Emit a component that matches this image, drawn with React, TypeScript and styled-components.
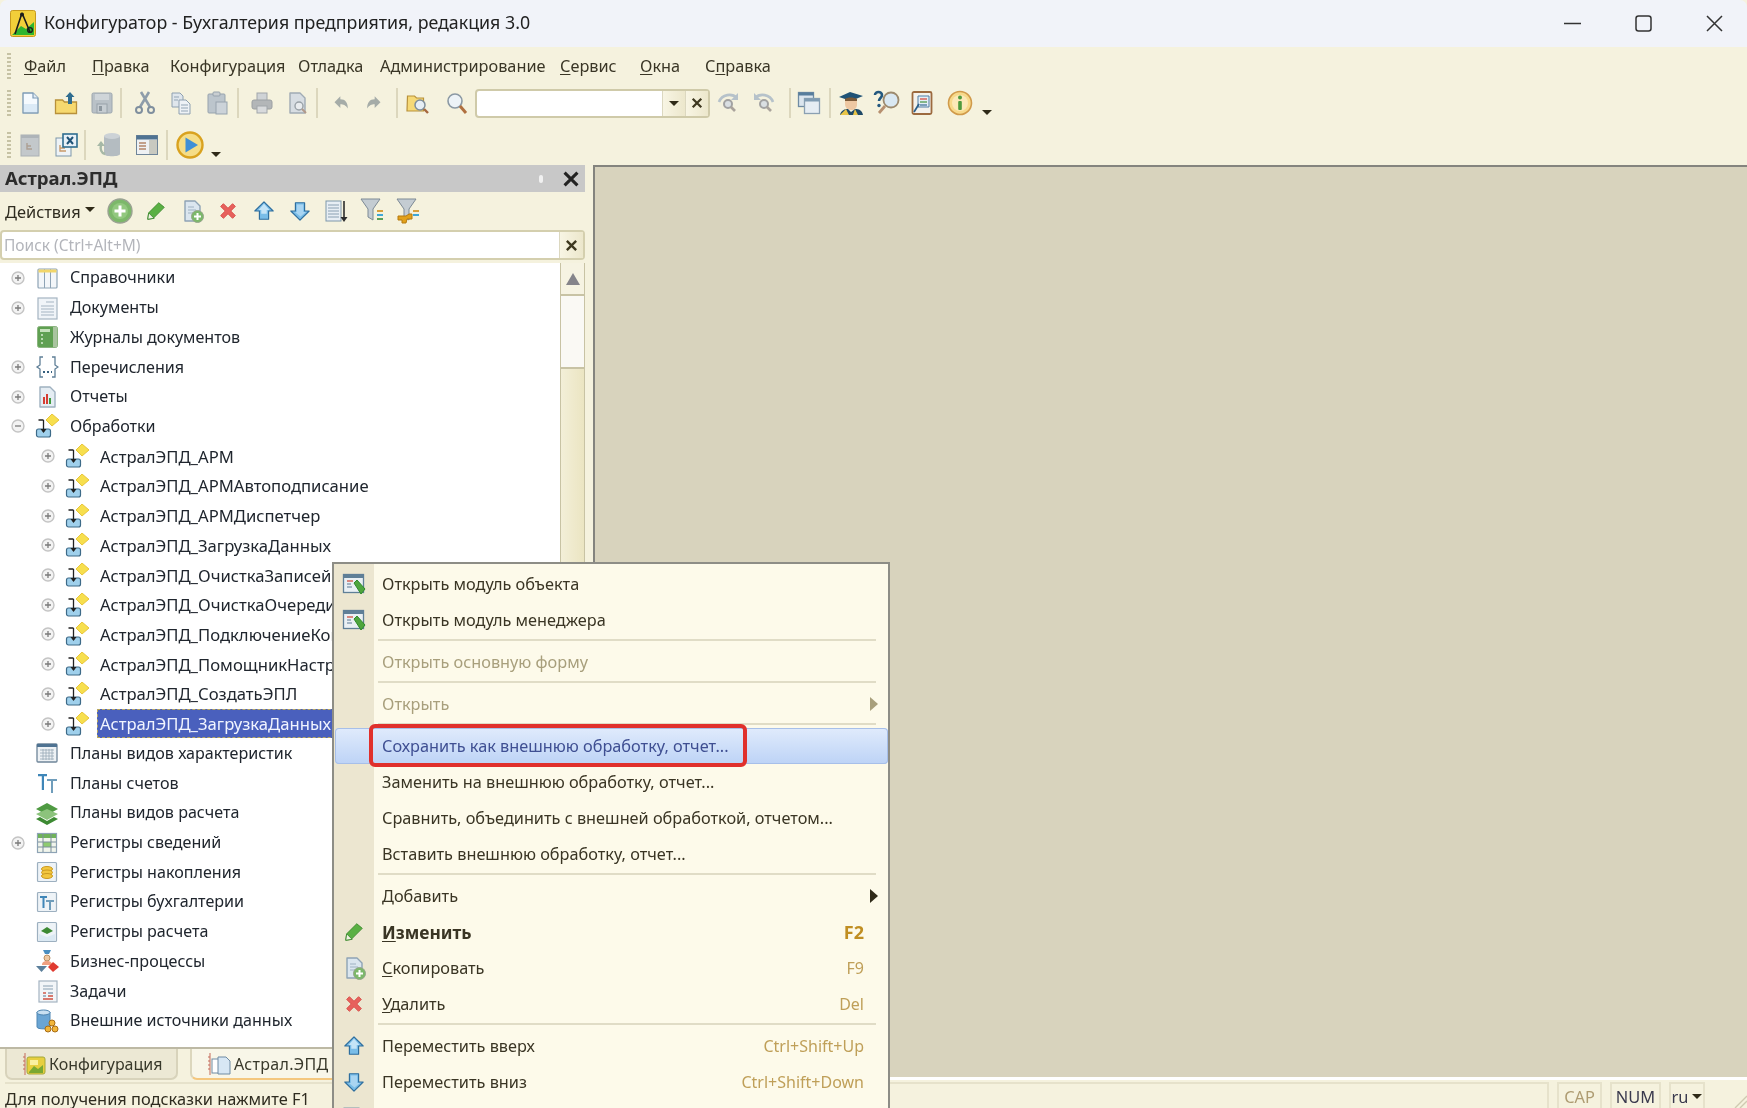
import React from 'react';
import styled, { createGlobalStyle } from 'styled-components';

const GlobalStyle = createGlobalStyle`
  html, body { margin: 0; padding: 0; background: #fff; }
  body { font-family: "Noto Sans", "Liberation Sans", sans-serif; }
`;

type SvgProps = { s?: number; children: React.ReactNode };
const Svg = ({ s = 24, children }: SvgProps) => (
  <svg width={s} height={s} viewBox="0 0 24 24" fill="none">{children}</svg>
);

const page = (fill: string, stroke: string) => (
  <path d="M5 2h10l5 5v15H5z" fill={fill} stroke={stroke} strokeWidth="1.4" strokeLinejoin="round" />
);

const I = {
  Logo: () => (
    <svg width={26} height={27} viewBox="0 0 26 27">
      <rect x="0.5" y="0.5" width="25" height="26" rx="2" fill="#f2cf3a" stroke="#c79a1e" />
      <path d="M2 25l9-9 5 3 8-7v13z" fill="#2fb52f" />
      <path d="M12 3L5 24M12 3l8 19" stroke="#1c1c1c" strokeWidth="1.6" fill="none" />
      <circle cx="12" cy="4.5" r="2" fill="#1c1c1c" />
      <circle cx="20" cy="20" r="2.4" fill="none" stroke="#1c1c1c" strokeWidth="1.4" />
    </svg>
  ),
  DocNew: () => (
    <Svg>
      {page('#f5fafe', '#7e9cb6')}
      <path d="M6 13h13v8H6z" fill="#dbeaf6" />
      <path d="M15 2v5h5" fill="#e2ecf4" stroke="#7e9cb6" strokeWidth="1.2" />
    </Svg>
  ),
  FolderUp: () => (
    <Svg>
      <path d="M1.5 9h7l2 2h12v11.5h-21z" fill="#f6d96f" stroke="#b8913a" strokeWidth="1.3" />
      <path d="M16 1l4.5 5H18v7h-4V6h-2.500z" fill="#2f6d8f" />
    </Svg>
  ),
  Floppy: () => (
    <Svg>
      <rect x="2" y="2" width="20" height="20" rx="1.5" fill="#b9c1c7" stroke="#9ca6ae" />
      <rect x="5" y="3" width="14" height="6" fill="#cfd5d9" />
      <rect x="7" y="13" width="10" height="9" fill="#c6cdd2" stroke="#98a2aa" />
      <rect x="9" y="15" width="3" height="5" fill="#8d979f" />
    </Svg>
  ),
  Scissors: () => (
    <Svg>
      <path d="M7 16L16 1M17 16L8 1" stroke="#8e9daa" strokeWidth="2.6" />
      <circle cx="6" cy="19" r="3" stroke="#7f8f9e" strokeWidth="2" />
      <circle cx="18" cy="19" r="3" stroke="#7f8f9e" strokeWidth="2" />
    </Svg>
  ),
  Copy: () => (
    <Svg>
      <path d="M3 2h8l3 3v11H3z" fill="#dfe6ec" stroke="#8ea0b0" />
      <path d="M10 9h7l4 4v10H10z" fill="#eef2f6" stroke="#8ea0b0" />
      <path d="M5 6h5M5 9h4M12 14h7M12 17h7M12 20h7" stroke="#93a5b5" />
    </Svg>
  ),
  Clipboard: () => (
    <Svg>
      <rect x="3" y="3" width="17" height="19" rx="1" fill="#bcc5cc" stroke="#97a3ad" />
      <rect x="8" y="1" width="7" height="4" rx="1" fill="#c9ced1" stroke="#97a3ad" />
      <rect x="11" y="11" width="11" height="12" fill="#ccd3d9" stroke="#97a3ad" />
    </Svg>
  ),
  Printer: () => (
    <Svg>
      <rect x="7" y="2" width="10" height="8" fill="#cfd3d6" stroke="#a1a6aa" />
      <rect x="2" y="9" width="20" height="9" rx="2" fill="#b3b6b8" stroke="#9ca0a3" />
      <rect x="7" y="15" width="10" height="7" fill="#d8dadc" stroke="#a1a6aa" />
    </Svg>
  ),
  Preview: () => (
    <Svg>
      {page('#d7dde2', '#a0abb4')}
      <circle cx="14" cy="15" r="4" fill="#e9ecee" stroke="#99a1a7" strokeWidth="1.4" />
      <path d="M17 18l4 4" stroke="#b29a8a" strokeWidth="2" />
    </Svg>
  ),
  Undo: () => (
    <Svg s={20}>
      <path d="M10 4L3 11l7 7v-4.500c4 0 6 1 9 5 0-7-3-11-9-11z" fill="#a5aca8" />
    </Svg>
  ),
  Redo: () => (
    <Svg s={20}>
      <path d="M14 4l7 7-7 7v-4.500c-4 0-6 1-9 5 0-7 3-11 9-11z" fill="#a5aca8" />
    </Svg>
  ),
  FolderFind: () => (
    <Svg>
      <path d="M1.500 5h7l2 2h7v13h-16.500z" fill="#f6d976" stroke="#b8913a" strokeWidth="1.2" />
      <circle cx="14" cy="14" r="5" fill="#e6eef4" stroke="#7f8e9a" strokeWidth="1.5" />
      <path d="M18 18l4 4" stroke="#a5673e" strokeWidth="2.400" />
    </Svg>
  ),
  Magnifier: () => (
    <Svg>
      <circle cx="10" cy="10" r="7" fill="#edf3f7" stroke="#8b99a4" strokeWidth="1.600" />
      <path d="M15 15l6 7" stroke="#b0703f" strokeWidth="3" />
    </Svg>
  ),
  FindNext: () => (
    <Svg>
      <path d="M3 11C6 3 16 2 21 7" stroke="#b6c2ca" strokeWidth="2.600" />
      <path d="M22 2v7h-7z" fill="#b6c2ca" />
      <circle cx="12" cy="13" r="4" fill="#dadfe2" stroke="#a2a2a2" strokeWidth="2" />
      <path d="M15 16l4 4" stroke="#aaa39c" strokeWidth="2.600" />
    </Svg>
  ),
  FindPrev: () => (
    <Svg>
      <path d="M21 11C18 3 8 2 3 7" stroke="#b6c2ca" strokeWidth="2.600" />
      <path d="M2 2v7h7z" fill="#b6c2ca" />
      <circle cx="12" cy="13" r="4" fill="#dadfe2" stroke="#a2a2a2" strokeWidth="2" />
      <path d="M15 16l4 4" stroke="#aaa39c" strokeWidth="2.600" />
    </Svg>
  ),
  Windows: () => (
    <Svg>
      <rect x="1.500" y="1.500" width="15" height="14" fill="#dbe5ee" stroke="#6f8ba3" strokeWidth="1.300" />
      <rect x="1.500" y="1.500" width="15" height="3" fill="#567d9c" />
      <rect x="7.500" y="7.500" width="15" height="15" fill="#e6edf3" stroke="#8ba0b2" strokeWidth="1.300" />
      <rect x="7.500" y="7.500" width="15" height="3" fill="#7f9bb2" />
    </Svg>
  ),
  Scholar: () => (
    <svg width={26} height={26} viewBox="0 0 26 26">
      <path d="M1 7l11-5 13 4-12 5z" fill="#1f5377" />
      <path d="M7 9h12v5c0 4-2 6-6 6s-6-3-6-6z" fill="#eec8a2" />
      <path d="M7 9c2-2 9-2 12 0v2H7z" fill="#7b5a38" />
      <path d="M2 25c1-5 5-6 8-6l3 3 4-3c4 0 7 1 8 6z" fill="#1f4a68" />
      <path d="M2 25l6-6 3 6zM17 19l3 6h-5z" fill="#e8c548" />
    </svg>
  ),
  HelpSearch: () => (
    <svg width={28} height={26} viewBox="0 0 28 26" fill="none">
      <path d="M2 5c0-4 7-4 7 0 0 3-3 3-3 6" stroke="#23587f" strokeWidth="2.600" />
      <circle cx="6" cy="15.500" r="1.700" fill="#23587f" />
      <circle cx="18" cy="10" r="7.500" fill="#d9e8f2" stroke="#9c8a6e" strokeWidth="1.800" />
      <path d="M12 16l-6 7" stroke="#b79070" strokeWidth="2.800" />
    </svg>
  ),
  Book: () => (
    <Svg>
      <rect x="2.500" y="1" width="19" height="22" rx="1.500" fill="#f4f2ec" stroke="#9c6a3f" strokeWidth="1.800" />
      <path d="M8 5h11v11H8z" fill="#e4eef6" stroke="#4f7da3" />
      <path d="M10 8h7" stroke="#d9584e" strokeWidth="1.400" />
      <path d="M10 11h7" stroke="#5aa05a" strokeWidth="1.400" />
      <path d="M10 14h7" stroke="#4f7da3" strokeWidth="1.400" />
      <path d="M4 21l5-8" stroke="#2b5f89" strokeWidth="1.800" />
    </Svg>
  ),
  Info: () => (
    <svg width={26} height={26} viewBox="0 0 26 26">
      <circle cx="13" cy="13" r="11.500" fill="#f7d98a" stroke="#d09a4a" strokeWidth="1.600" />
      <circle cx="13" cy="13" r="8" fill="#fbe9b8" />
      <circle cx="13" cy="7.500" r="2" fill="#4f9a3c" />
      <rect x="11.200" y="11" width="3.600" height="9" rx="1" fill="#4f9a3c" />
    </svg>
  ),
  FormGray: () => (
    <Svg>
      <rect x="3" y="2" width="18" height="21" fill="#c3c8cb" stroke="#aab0b4" />
      <rect x="3" y="2" width="18" height="3" fill="#aeb4b8" />
      <path d="M9 10v6h5M9 13h4" stroke="#ad9f92" strokeWidth="1.400" />
    </Svg>
  ),
  ModuleX: () => (
    <Svg>
      <rect x="2" y="5" width="15" height="18" fill="#eef3f6" stroke="#7e97aa" />
      <path d="M6 12v6h6M6 15h5" stroke="#c99a6a" strokeWidth="1.400" />
      <rect x="9" y="1" width="14" height="13" fill="#e7f0f7" stroke="#2f6d8f" strokeWidth="1.600" />
      <path d="M13 4l6 7M19 4l-6 7" stroke="#1f5377" strokeWidth="2" />
    </Svg>
  ),
  DbArrow: () => (
    <svg width={26} height={26} viewBox="0 0 26 26" fill="none">
      <path d="M7 4v18c0 3 16 3 16 0V4z" fill="#b4bcc1" />
      <ellipse cx="15" cy="4" rx="8" ry="3" fill="#ccd2d6" />
      <path d="M8 22c-4-1-5-5-4-9" stroke="#a6b8a6" strokeWidth="2.400" />
      <path d="M0 14l4-5 4 5z" fill="#a6b8a6" />
    </svg>
  ),
  TableWin: () => (
    <Svg>
      <rect x="1.500" y="2.500" width="21" height="19" fill="#eef1f3" stroke="#6f8599" />
      <rect x="1.500" y="2.500" width="21" height="4" fill="#4f7392" />
      <rect x="14" y="7" width="8" height="14" fill="#c8c9c0" />
      <path d="M4 10h7M4 13h7M4 16h7" stroke="#b4856a" strokeWidth="1.300" />
    </Svg>
  ),
  Play: () => (
    <svg width={28} height={28} viewBox="0 0 28 28">
      <circle cx="14" cy="14" r="12.500" fill="#f5dd87" stroke="#d9a21f" strokeWidth="2.400" />
      <path d="M9.500 6.500L22 14 9.500 21.500z" fill="#3f8fd6" />
    </svg>
  ),
  PlusCircle: () => (
    <svg width={26} height={26} viewBox="0 0 26 26">
      <circle cx="13" cy="13" r="12" fill="#7cb86a" stroke="#9aa392" strokeWidth="1.400" />
      <circle cx="13" cy="13" r="8" fill="#92c87f" />
      <path d="M13 7.500v11M7.500 13h11" stroke="#fff" strokeWidth="3" />
    </svg>
  ),
  Pencil: () => (
    <Svg s={22}>
      <path d="M15 3l6 5L9 20l-6 1 1-7z" fill="#5ab043" stroke="#3c8a2e" />
      <path d="M4 14l6 6-7 1z" fill="#f1f1e4" stroke="#3c8a2e" />
    </Svg>
  ),
  DocPlus: () => (
    <Svg>
      {page('#dbe6ef', '#8ea3b5')}
      <path d="M8 8h6M8 11h8M8 14h5" stroke="#9fb2c2" />
      <circle cx="17.500" cy="17.500" r="6" fill="#7cb86a" stroke="#95a58a" />
      <path d="M17.500 14v7M14 17.500h7" stroke="#fff" strokeWidth="2" />
    </Svg>
  ),
  RedX: () => (
    <Svg s={22}>
      <path d="M4 7l3-3 5 5 5-5 3 3-5 5 5 5-3 3-5-5-5 5-3-3 5-5z" fill="#e7615c" stroke="#d84b46" />
    </Svg>
  ),
  ArrowUp: () => (
    <Svg s={22}>
      <path d="M12 2l10 10h-5v9H7v-9H2z" fill="#79bde8" stroke="#2e6e9e" strokeWidth="1.300" strokeLinejoin="round" />
      <path d="M12 4l6 7h-3v4H9v-4H6z" fill="#c4e4f7" />
    </Svg>
  ),
  ArrowDown: () => (
    <Svg s={22}>
      <path d="M12 22L2 12h5V3h10v9h5z" fill="#79bde8" stroke="#2e6e9e" strokeWidth="1.300" strokeLinejoin="round" />
      <path d="M8.500 5h7v8h3l-6 5-6-5h2z" fill="#a9d5f2" />
    </Svg>
  ),
  ListDown: () => (
    <Svg>
      <rect x="2" y="2" width="15" height="20" fill="#e7eef4" stroke="#7e97aa" />
      <path d="M4 6h11M4 9h11M4 12h11M4 15h11M4 18h11" stroke="#8aa0b2" />
      <path d="M20 2v17" stroke="#2b2b2b" strokeWidth="1.600" />
      <path d="M16.500 18h7L20 23z" fill="#2b2b2b" />
    </Svg>
  ),
  Filter: () => (
    <svg width={26} height={28} viewBox="0 0 26 28">
      <path d="M1 2h19l-7 10v11l-5-3v-8z" fill="#c4ccd2" stroke="#7d8a95" />
      <path d="M17 14h6" stroke="#d9a03a" strokeWidth="2" />
      <path d="M17 18h6" stroke="#3fa7d6" strokeWidth="2" />
      <path d="M17 22h6" stroke="#5aa05a" strokeWidth="2" />
    </svg>
  ),
  FilterKey: () => (
    <svg width={26} height={28} viewBox="0 0 26 28">
      <path d="M1 2h19l-7 10v11l-5-3v-8z" fill="#c4ccd2" stroke="#7d8a95" />
      <path d="M17 14h6" stroke="#d9a03a" strokeWidth="2" />
      <path d="M17 18h6" stroke="#3fa7d6" strokeWidth="2" />
      <path d="M2 19h8l3-2h3v5h-5l-1 4H6v-3H2z" fill="#e2a11a" stroke="#b57a10" />
    </svg>
  ),
  Catalog: () => (
    <Svg>
      <rect x="3" y="3" width="19" height="19" rx="1" fill="#f3f6f9" stroke="#8ea3b5" strokeWidth="1.200" />
      <path d="M9.500 3v19M15.500 3v19" stroke="#8ea3b5" />
      <rect x="3.500" y="3.500" width="18" height="3" fill="#f2d66a" />
    </Svg>
  ),
  Document: () => (
    <Svg>
      <rect x="3" y="2" width="19" height="21" fill="#f0f4f8" stroke="#a5b4c2" strokeWidth="1.200" />
      <path d="M11 6h8M6 10h13M6 13h13M6 16h13M6 19h13" stroke="#a5b4c2" />
    </Svg>
  ),
  Journal: () => (
    <Svg>
      <rect x="2.500" y="1.500" width="20" height="21" rx="2" fill="#5fa052" stroke="#8ab47e" />
      <rect x="5" y="4" width="10" height="3" fill="#c6e2bc" />
      <path d="M6 10h2M6 14h2M6 18h2" stroke="#d7ecd0" strokeWidth="1.500" />
      <rect x="18" y="2" width="4" height="20" fill="#a9c49f" />
    </Svg>
  ),
  Enum: () => (
    <Svg>
      <path d="M8 2H5v8l-3 2 3 2v8h3M17 2h3v8l3 2-3 2v8h-3" stroke="#5f7f97" strokeWidth="1.300" />
      <path d="M8 17h2M12 17h2M16 17h1" stroke="#36607f" strokeWidth="2" />
    </Svg>
  ),
  Report: () => (
    <Svg>
      {page('#e5edf3', '#9fb1c0')}
      <rect x="8" y="12" width="2" height="7" fill="#d63d32" />
      <rect x="11" y="9" width="2" height="10" fill="#d63d32" />
      <rect x="14" y="13" width="2" height="6" fill="#3f9b3f" />
    </Svg>
  ),
  Proc: () => (
    <Svg>
      <rect x="1.500" y="15" width="14" height="8" rx="2" fill="#9fd0ec" stroke="#3d6a88" strokeWidth="1.200" />
      <path d="M8.500 6v12M3.500 6h5" stroke="#222" strokeWidth="1.300" />
      <path d="M5.500 15l3 4 3-4z" fill="#222" />
      <path d="M17 0l7 6-7 6-6-6z" fill="#f7df4e" stroke="#e8c53a" />
    </Svg>
  ),
  CharPlan: () => (
    <Svg>
      <rect x="2" y="3" width="20" height="18" rx="1" fill="#eef2f5" stroke="#6f8599" strokeWidth="1.300" />
      <rect x="2" y="3" width="20" height="3" fill="#4f7392" />
      <path d="M5 9h14M5 12h14M5 15h14M5 18h14M8 8v11M11 8v11M14 8v11M17 8v11" stroke="#98a8b5" strokeWidth=".8" />
    </Svg>
  ),
  AccPlan: () => (
    <Svg>
      <path d="M3 3h9v2.200H9V19H6.800V5.200H3z" fill="#3f86b8" />
      <path d="M12 8h10v2h-4v12h-2V10h-4z" fill="#6f9dbb" />
    </Svg>
  ),
  CalcPlan: () => (
    <Svg>
      <path d="M12 2l11 6-11 6L1 8z" fill="#4f9a42" />
      <path d="M12 8l11 5-11 6-11-6z" fill="#8cc37c" />
      <path d="M5 16l7 4 7-4 4 2-11 6-11-6z" fill="#3d8a33" />
    </Svg>
  ),
  InfoReg: () => (
    <Svg>
      <rect x="2.500" y="2.500" width="19" height="19" fill="#f1f5ec" stroke="#8ea3b5" strokeWidth="1.200" />
      <rect x="3" y="3" width="18" height="4" fill="#6fb25a" />
      <rect x="8" y="11" width="8" height="5" fill="#8ecb6f" />
      <path d="M8 3v18M16 3v18M3 11h18M3 16h18" stroke="#7d8f9d" />
    </Svg>
  ),
  AccumReg: () => (
    <Svg>
      <rect x="2.500" y="2.500" width="19" height="19" rx="1" fill="#eef3f7" stroke="#9db0c0" strokeWidth="1.200" />
      <ellipse cx="12" cy="9" rx="5.500" ry="2.500" fill="#f2c63e" stroke="#cc9a20" />
      <ellipse cx="12" cy="12.500" rx="5.500" ry="2.500" fill="#f2c63e" stroke="#cc9a20" />
      <ellipse cx="12" cy="16" rx="5.500" ry="2.500" fill="#f2c63e" stroke="#cc9a20" />
    </Svg>
  ),
  AcctReg: () => (
    <Svg>
      <rect x="2.500" y="2.500" width="19" height="19" rx="1" fill="#eef3f7" stroke="#9db0c0" strokeWidth="1.200" />
      <path d="M5 6h7v2H9.500v10h-2V8H5z" fill="#3f86b8" />
      <path d="M11 10h8v2h-3v8h-2v-8h-3z" fill="#6f9dbb" />
    </Svg>
  ),
  CalcReg: () => (
    <Svg>
      <rect x="2.500" y="2.500" width="19" height="19" rx="1" fill="#eef3f7" stroke="#9db0c0" strokeWidth="1.200" />
      <path d="M12 7l6 4-6 3-6-3z" fill="#3d8a33" />
      <path d="M4 14l8 3 8-3v7H4z" fill="#dbe9f3" />
    </Svg>
  ),
  Biz: () => (
    <Svg>
      <path d="M8 1h8l-2 4h-4z" fill="#4a8ec0" />
      <circle cx="12" cy="9" r="3" fill="#eec8a2" stroke="#b98e60" />
      <path d="M7 16c0-3 2-4 5-4s5 1 5 4z" fill="#f0a080" />
      <path d="M1 17h11l-5.500 6z" fill="#5b7f9b" />
      <path d="M18 13l6 5-6 5-5-5z" fill="#e03a30" />
    </Svg>
  ),
  Task: () => (
    <Svg>
      <rect x="4" y="2" width="18" height="21" fill="#f2f5f8" stroke="#a5b4c2" strokeWidth="1.200" />
      <path d="M8 7h10M8 10h10" stroke="#8aa0b2" />
      <path d="M8 14h3" stroke="#d05040" strokeWidth="1.400" />
      <path d="M13 14h5M8 17h3" stroke="#8aa0b2" strokeWidth="1.400" />
      <path d="M13 17h5M8 20h10" stroke="#d05040" strokeWidth="1.400" />
    </Svg>
  ),
  External: () => (
    <Svg>
      <path d="M2 3v15c0 2.500 13 2.500 13 0V3z" fill="#6aa5d4" stroke="#4f86b2" />
      <ellipse cx="8.500" cy="3.500" rx="6.500" ry="2.500" fill="#c8e0f2" stroke="#4f86b2" />
      <circle cx="17" cy="14" r="3" fill="#f2b63a" stroke="#a86c14" />
      <circle cx="13" cy="20" r="3" fill="#f2b63a" stroke="#a86c14" />
      <circle cx="20" cy="20" r="3" fill="#f2b63a" stroke="#a86c14" />
    </Svg>
  ),
  ModuleEdit: () => (
    <Svg>
      <rect x="1.500" y="2.500" width="20" height="18" fill="#eaf0f4" stroke="#5f7f97" strokeWidth="1.300" />
      <rect x="1.500" y="2.500" width="20" height="3.500" fill="#5f7f97" />
      <path d="M5 9h6" stroke="#d05040" strokeWidth="1.300" />
      <path d="M5 12h4M5 15h5" stroke="#8aa0b2" strokeWidth="1.300" />
      <path d="M12 11l3-3 8 9-4 5z" fill="#4fa53e" stroke="#2f8a2a" />
    </Svg>
  ),
  ConfigTab: () => (
    <Svg>
      <path d="M3 1v22M1 5h2M1 9h2M1 13h2M1 17h2" stroke="#c46a5a" />
      <rect x="5" y="5" width="18" height="17" rx="2" fill="#e7cf3f" stroke="#a5a83a" />
      <rect x="8" y="8" width="8" height="5" fill="#fbf0a0" />
      <path d="M7 20l5-6 4 3 5-4v8H7z" fill="#7aa832" />
    </Svg>
  ),
  AstralTab: () => (
    <Svg>
      <path d="M3 1v22M1 5h2M1 9h2M1 13h2M1 17h2" stroke="#c46a5a" />
      <rect x="5" y="7" width="12" height="14" fill="#fff" stroke="#6f8ba3" />
      <path d="M11 5h8l4 4v13H11z" fill="#d7e7f4" stroke="#6f8ba3" />
    </Svg>
  ),
};

type IconName = keyof typeof I;

// снимок экрана увеличен и слегка размыт, поэтому небольшой blur на всё окно
const Shell = styled.div`
  position: relative;
  width: 1747px;
  height: 1108px;
  overflow: hidden;
  display: flex;
  flex-direction: column;
  background: #f5f2de;
  color: #2a2a22;
  font-size: 16px;
  filter: blur(0.35px);
`;

const TitleBar = styled.div`
  height: 47px;
  flex: none;
  display: flex;
  align-items: center;
  padding: 0 24px 0 10px;
  box-sizing: border-box;
  background: #f1f3f9;
  border-radius: 7px 7px 0 0;
`;

const TitleText = styled.span`
  margin: -3px 0 0 8px;
  font-size: 17.800px;
  color: #222;
`;

const WinControls = styled.div`
  margin-left: auto;
  display: flex;
  align-items: center;
  gap: 54px;
`;

const MenuBar = styled.div`
  height: 38px;
  flex: none;
  display: flex;
  align-items: center;
  padding-left: 7px;
`;

const Grip = styled.span`
  flex: none;
  width: 4px;
  height: 26px;
  background: repeating-linear-gradient(to bottom, #c6c2a4 0 2px, transparent 2px 4px);
`;

const MenuEntry = styled.span<{ $w: number }>`
  width: ${(p) => p.$w}px;
  flex: none;
  font-size: 16.300px;
  color: #3a3626;
`;

const Mn = styled.span`
  text-decoration: underline;
  text-underline-offset: 2px;
`;

const Toolbar = styled.div<{ $h: number; $pt?: number }>`
  height: ${(p) => p.$h}px;
  flex: none;
  box-sizing: border-box;
  padding-top: ${(p) => p.$pt ?? 0}px;
  padding-left: 7px;
  display: flex;
  align-items: center;
`;

const Tool = styled.span<{ $w?: number; $ml?: number }>`
  flex: none;
  width: ${(p) => p.$w ?? 36}px;
  margin-left: ${(p) => p.$ml ?? 0}px;
  display: flex;
  align-items: center;
  justify-content: center;
`;

const ToolSep = styled.span<{ $ml?: number; $mr?: number }>`
  flex: none;
  width: 2px;
  height: 30px;
  margin-left: ${(p) => p.$ml ?? 0}px;
  margin-right: ${(p) => p.$mr ?? 0}px;
  background: #dcd7bd;
`;

const Caret = styled.span<{ $ml?: number; $mt?: number }>`
  flex: none;
  width: 0;
  height: 0;
  margin-left: ${(p) => p.$ml ?? 0}px;
  margin-top: ${(p) => p.$mt ?? 0}px;
  border-left: 5px solid transparent;
  border-right: 5px solid transparent;
  border-top: 5px solid #2f2a18;
`;

const Combo = styled.div`
  flex: none;
  width: 235px;
  height: 29px;
  margin-left: 1px;
  box-sizing: border-box;
  border: 2px solid #cfcaa9;
  border-radius: 4px;
  background: #fff;
  display: flex;
  justify-content: flex-end;
`;

const ComboBtn = styled.span<{ $w: number }>`
  width: ${(p) => p.$w}px;
  flex: none;
  box-sizing: border-box;
  border-left: 1px solid #dcd8c0;
  background: linear-gradient(to right, #f8f5e4, #ece7cc);
  display: flex;
  align-items: center;
  justify-content: center;
`;

const Workspace = styled.div`
  flex: 1;
  min-height: 0;
  display: flex;
`;

const LeftPanel = styled.div`
  width: 585px;
  flex: none;
  display: flex;
  flex-direction: column;
`;

const PanelHeader = styled.div`
  height: 27px;
  flex: none;
  background: #c8c8c8;
  display: flex;
  align-items: center;
  padding: 0 5px;
`;

const PanelTitle = styled.span`
  margin-top: -2px;
  font-size: 18.600px;
  font-weight: 700;
  color: #2c2c2c;
`;

const PinDot = styled.span`
  margin-left: auto;
  margin-right: 19px;
  width: 4px;
  height: 8px;
  border-radius: 2px;
  background: #f1f1f1;
`;

const ActionBar = styled.div`
  height: 38px;
  flex: none;
  display: flex;
  align-items: center;
  padding-left: 5px;
`;

const ActionLabel = styled.span`
  font-size: 16.400px;
  color: #2f2c20;
`;

const SearchBox = styled.div`
  height: 30px;
  flex: none;
  box-sizing: border-box;
  border: 2px solid #d4cfae;
  border-radius: 4px;
  background: #fff;
  display: flex;
  align-items: center;
  justify-content: space-between;
  padding-left: 2px;
`;

const SearchHint = styled.span`
  font-size: 15.500px;
  color: #b3b5bb;
`;

const SearchClear = styled.span`
  width: 23px;
  align-self: stretch;
  border-left: 1px solid #dcd8c0;
  background: linear-gradient(to right, #f8f5e4, #ece7cc);
  display: flex;
  align-items: center;
  justify-content: center;
`;

const TreeArea = styled.div`
  flex: 1;
  min-height: 0;
  margin-top: 3px;
  display: flex;
  background: #fff;
  border-bottom: 2px solid #bdb9a4;
`;

const TreeList = styled.div`
  flex: 1;
  min-width: 0;
  overflow: hidden;
`;

const TreeRow = styled.div<{ $level: number }>`
  height: 29.720px;
  display: flex;
  align-items: center;
  padding-left: ${(p) => 11 + p.$level * 30}px;
`;

const ToggleSlot = styled.span`
  flex: none;
  display: flex;
  width: 14px;
  height: 14px;
  margin-right: 10px;
`;

const TreeIcon = styled.span`
  flex: none;
  display: flex;
  width: 24px;
  height: 24px;
  margin-right: 11px;
`;

const TreeLabel = styled.span<{ $selected?: boolean; $level: number }>`
  font-size: ${(p) => (p.$level ? 16.650 : 16.100)}px;
  line-height: 29px;
  white-space: nowrap;
  color: ${(p) => (p.$selected ? '#f1f4ff' : '#20262e')};
  background: ${(p) => (p.$selected ? '#4a60bd' : 'transparent')};
  outline: ${(p) => (p.$selected ? '1px dashed #b8a860' : 'none')};
  outline-offset: -1px;
  margin-left: ${(p) => (p.$selected ? '-3px' : '0')};
  padding: ${(p) => (p.$selected ? '0 120px 0 3px' : '0')};
`;

const ScrollTrack = styled.div`
  width: 25px;
  flex: none;
  box-sizing: border-box;
  border-left: 1px solid #c8c3a4;
  border-right: 1px solid #c8c3a4;
  background: linear-gradient(to right, #f3efd8, #ebe5c2);
`;

const ScrollUp = styled.div`
  height: 33px;
  box-sizing: border-box;
  border-bottom: 2px solid #c8c3a4;
  background: #f6f3e2;
  display: flex;
  align-items: center;
  justify-content: center;
`;

const ScrollThumb = styled.div`
  height: 73px;
  box-sizing: border-box;
  border-bottom: 2px solid #c8c3a4;
  background: #faf9f4;
`;

const TabBar = styled.div`
  height: 31px;
  flex: none;
  display: flex;
  padding-left: 5px;
  gap: 12px;
  overflow: hidden;
`;

const Tab = styled.div<{ $active?: boolean }>`
  flex: none;
  width: ${(p) => (p.$active ? '220px' : '173px')};
  box-sizing: border-box;
  display: flex;
  align-items: center;
  gap: 3px;
  padding-left: 15px;
  font-size: 16px;
  letter-spacing: ${(p) => (p.$active ? '0.3px' : '0')};
  color: #38382a;
  background: ${(p) => (p.$active ? '#f8f6e8' : '#ece8d4')};
  border: 2px solid ${(p) => (p.$active ? '#dcd7bd' : '#d8d3bb')};
  border-top: none;
  border-bottom-color: ${(p) => (p.$active ? '#f4c77e' : '#d8d3bb')};
  border-radius: 0 0 7px 7px;
`;

const Gutter = styled.div`
  width: 8px;
  flex: none;
`;

const MainArea = styled.div`
  flex: 1;
  box-sizing: border-box;
  background: #d8d3bd;
  border-left: 2px solid #84847e;
  border-top: 2px solid #84847e;
  border-bottom: 3px solid #fff;
`;

const StatusBar = styled.div`
  height: 28px;
  flex: none;
  display: flex;
  align-items: stretch;
  padding-left: 5px;
  font-size: 16.400px;
`;

const StatusText = styled.span`
  flex: 1;
  margin: 2px 8px 0 0;
  line-height: 29px;
  color: #2f2c20;
  border-right: 2px solid #e6e2cb;
  border-top: 2px solid #e6e2cb;
`;

const StatusCell = styled.span<{ $w: number; $off?: boolean }>`
  flex: none;
  width: ${(p) => p.$w}px;
  margin: 2px 8px 0 0;
  box-sizing: border-box;
  border: 2px solid #e6e2cb;
  border-bottom: none;
  display: flex;
  align-items: center;
  justify-content: center;
  gap: 4px;
  color: ${(p) => (p.$off ? '#ae9c72' : '#3a3a4e')};
`;

const GripCorner = styled.span`
  flex: none;
  width: 31px;
  margin-left: 3px;
  display: flex;
  align-items: flex-end;
  justify-content: flex-end;
`;

/* всплывающее меню лежит поверх дерева и рабочей области */
const ContextMenu = styled.div`
  position: absolute;
  left: 332px;
  top: 562px;
  width: 558px;
  box-sizing: border-box;
  padding: 2px 0 0;
  border: 2px solid #8d8d86;
  background: linear-gradient(to right, #ece6d0 40px, #fdfaea 40px);
`;

const MenuRow = styled.div<{ $hover?: boolean }>`
  position: relative;
  height: 36px;
  box-sizing: border-box;
  display: flex;
  align-items: center;
  padding-right: 24px;
  ${(p) =>
    p.$hover &&
    `
    background: linear-gradient(to bottom, #e0ebfc, #bdd3f6);
    box-shadow: inset 0 0 0 1px #a7bfe9;
    border-radius: 4px;
    margin: 0 0 0 1px;
  `}
`;

const MenuIcon = styled.span`
  flex: none;
  width: 40px;
  height: 24px;
  display: flex;
  align-items: center;
  justify-content: center;
  margin-right: 8px;
`;

const MenuLabel = styled.span<{ $tone?: 'off' | 'hover'; $bold?: boolean }>`
  flex: 1;
  margin-left: ${(p) => (p.$tone === 'hover' ? -1 : 0)}px;
  font-size: ${(p) => (p.$bold ? 17.400 : 16.300)}px;
  font-weight: ${(p) => (p.$bold ? 700 : 400)};
  color: ${(p) => (p.$tone === 'off' ? '#a89f7c' : p.$tone === 'hover' ? '#3f4f92' : '#3a3524')};
`;

const Shortcut = styled.span<{ $bold?: boolean }>`
  font-size: ${(p) => (p.$bold ? 18 : 16)}px;
  font-weight: ${(p) => (p.$bold ? 700 : 400)};
  color: ${(p) => (p.$bold ? '#c08e22' : '#bf9f58')};
`;

const SubArrow = styled.span<{ $off?: boolean }>`
  width: 0;
  height: 0;
  margin-right: -14px;
  border-top: 7px solid transparent;
  border-bottom: 7px solid transparent;
  border-left: 8px solid ${(p) => (p.$off ? '#a89f7c' : '#2f2a18')};
`;

const MenuSep = styled.div`
  height: 2px;
  margin: 1px 12px 3px 44px;
  background: #e0dcc6;
`;

/* красная рамка - пометка поверх пункта меню */
const Callout = styled.span`
  position: absolute;
  left: 34px;
  top: -4px;
  width: 378px;
  height: 43px;
  box-sizing: border-box;
  border: 4px solid #e0302c;
  border-radius: 6px;
`;

const Plus = ({ open }: { open?: boolean }) => (
  <svg width={14} height={14} viewBox="0 0 14 14">
    <circle cx="7" cy="7" r="6" fill="#f3f3f3" stroke="#c4c4c4" strokeWidth="1.400" />
    <path d={open ? 'M4 7h6' : 'M4 7h6M7 4v6'} stroke="#7b7b7b" strokeWidth="1.300" />
  </svg>
);

const Cross = ({ s = 14, w = 2.600, c = '#3e3820' }: { s?: number; w?: number; c?: string }) => (
  <svg width={s} height={s} viewBox="0 0 14 14">
    <path d="M2 2l10 10M12 2L2 12" stroke={c} strokeWidth={w} />
  </svg>
);

type TreeItem = { label: string; icon: IconName; level?: number; toggle?: 'plus' | 'minus'; selected?: boolean };

const child = (label: string, selected?: boolean): TreeItem => ({
  label,
  icon: 'Proc',
  level: 1,
  toggle: 'plus',
  selected,
});

const tree: TreeItem[] = [
  { label: 'Справочники', icon: 'Catalog', toggle: 'plus' },
  { label: 'Документы', icon: 'Document', toggle: 'plus' },
  { label: 'Журналы документов', icon: 'Journal' },
  { label: 'Перечисления', icon: 'Enum', toggle: 'plus' },
  { label: 'Отчеты', icon: 'Report', toggle: 'plus' },
  { label: 'Обработки', icon: 'Proc', toggle: 'minus' },
  child('АстралЭПД_АРМ'),
  child('АстралЭПД_АРМАвтоподписание'),
  child('АстралЭПД_АРМДиспетчер'),
  child('АстралЭПД_ЗагрузкаДанных'),
  child('АстралЭПД_ОчисткаЗаписей'),
  child('АстралЭПД_ОчисткаОчереди'),
  child('АстралЭПД_ПодключениеКонтрагента'),
  child('АстралЭПД_ПомощникНастройки'),
  child('АстралЭПД_СоздатьЭПЛ'),
  child('АстралЭПД_ЗагрузкаДанных', true),
  { label: 'Планы видов характеристик', icon: 'CharPlan' },
  { label: 'Планы счетов', icon: 'AccPlan' },
  { label: 'Планы видов расчета', icon: 'CalcPlan' },
  { label: 'Регистры сведений', icon: 'InfoReg', toggle: 'plus' },
  { label: 'Регистры накопления', icon: 'AccumReg' },
  { label: 'Регистры бухгалтерии', icon: 'AcctReg' },
  { label: 'Регистры расчета', icon: 'CalcReg' },
  { label: 'Бизнес-процессы', icon: 'Biz' },
  { label: 'Задачи', icon: 'Task' },
  { label: 'Внешние источники данных', icon: 'External' },
];

const App = () => (
  <>
    <GlobalStyle />
    <Shell>
      <TitleBar>
        <I.Logo />
        <TitleText>Конфигуратор - Бухгалтерия предприятия, редакция 3.0</TitleText>
        <WinControls>
          <svg width={17} height={17} viewBox="0 0 17 17">
            <path d="M0 8.500h17" stroke="#333" strokeWidth="1.500" />
          </svg>
          <svg width={17} height={17} viewBox="0 0 17 17">
            <rect x="1" y="1" width="15" height="15" rx="2.500" fill="none" stroke="#333" strokeWidth="1.500" />
          </svg>
          <svg width={17} height={17} viewBox="0 0 17 17">
            <path d="M1 1l15 15M16 1L1 16" stroke="#333" strokeWidth="1.500" />
          </svg>
        </WinControls>
      </TitleBar>

      <MenuBar>
        <Grip />
        <MenuEntry $w={13} />
        <MenuEntry $w={68}><Mn>Ф</Mn>айл</MenuEntry>
        <MenuEntry $w={78}><Mn>П</Mn>равка</MenuEntry>
        <MenuEntry $w={128}>Конфигурация</MenuEntry>
        <MenuEntry $w={82}>Отладка</MenuEntry>
        <MenuEntry $w={180}>Администрирование</MenuEntry>
        <MenuEntry $w={80}><Mn>С</Mn>ервис</MenuEntry>
        <MenuEntry $w={65}><Mn>О</Mn>кна</MenuEntry>
        <MenuEntry $w={100}>С<Mn>п</Mn>равка</MenuEntry>
      </MenuBar>

      <Toolbar $h={36}>
        <Grip />
        <Tool $ml={1}><I.DocNew /></Tool>
        <Tool><I.FolderUp /></Tool>
        <Tool><I.Floppy /></Tool>
        <ToolSep $mr={5} />
        <Tool><I.Scissors /></Tool>
        <Tool><I.Copy /></Tool>
        <Tool><I.Clipboard /></Tool>
        <ToolSep $ml={2} $mr={5} />
        <Tool><I.Printer /></Tool>
        <Tool $w={34}><I.Preview /></Tool>
        <ToolSep $ml={2} $mr={8} />
        <Tool $w={32}><I.Undo /></Tool>
        <Tool $w={30}><I.Redo /></Tool>
        <ToolSep $ml={8} $mr={3} />
        <Tool $w={34}><I.FolderFind /></Tool>
        <Tool $w={34} $ml={5}><I.Magnifier /></Tool>
        <Combo>
          <ComboBtn $w={23}><Caret /></ComboBtn>
          <ComboBtn $w={23}><Cross s={12} /></ComboBtn>
        </Combo>
        <Tool><I.FindNext /></Tool>
        <Tool><I.FindPrev /></Tool>
        <ToolSep $ml={7} $mr={1} />
        <Tool $w={34}><I.Windows /></Tool>
        <ToolSep $ml={3} $mr={2} />
        <Tool><I.Scholar /></Tool>
        <Tool><I.HelpSearch /></Tool>
        <Tool $w={33}><I.Book /></Tool>
        <Tool $ml={4}><I.Info /></Tool>
        <Caret $ml={4} $mt={18} />
      </Toolbar>

      <Toolbar $h={44} $pt={4}>
        <Grip />
        <Tool $ml={1}><I.FormGray /></Tool>
        <Tool><I.ModuleX /></Tool>
        <ToolSep $mr={5} />
        <Tool $w={38}><I.DbArrow /></Tool>
        <Tool><I.TableWin /></Tool>
        <ToolSep $ml={1} $mr={5} />
        <Tool $w={34}><I.Play /></Tool>
        <Caret $ml={4} $mt={18} />
      </Toolbar>

      <Workspace>
        <LeftPanel>
          <PanelHeader>
            <PanelTitle>Астрал.ЭПД</PanelTitle>
            <PinDot />
            <Cross s={18} w={2.400} c="#222" />
          </PanelHeader>
          <ActionBar>
            <ActionLabel>Действия</ActionLabel>
            <Caret $ml={4} $mt={-4} />
            <Tool $w={36} $ml={7}><I.PlusCircle /></Tool>
            <Tool><I.Pencil /></Tool>
            <Tool><I.DocPlus /></Tool>
            <Tool><I.RedX /></Tool>
            <Tool><I.ArrowUp /></Tool>
            <Tool><I.ArrowDown /></Tool>
            <Tool $w={37}><I.ListDown /></Tool>
            <Tool><I.Filter /></Tool>
            <Tool><I.FilterKey /></Tool>
          </ActionBar>
          <SearchBox>
            <SearchHint>Поиск (Ctrl+Alt+M)</SearchHint>
            <SearchClear><Cross s={13} /></SearchClear>
          </SearchBox>
          <TreeArea>
            <TreeList>
              {tree.map((item) => {
                const Icon = I[item.icon];
                return (
                  <TreeRow key={item.label + String(item.selected)} $level={item.level ?? 0}>
                    <ToggleSlot>
                      {item.toggle && <Plus open={item.toggle === 'minus'} />}
                    </ToggleSlot>
                    <TreeIcon><Icon /></TreeIcon>
                    <TreeLabel $selected={item.selected} $level={item.level ?? 0}>{item.label}</TreeLabel>
                  </TreeRow>
                );
              })}
            </TreeList>
            <ScrollTrack>
              <ScrollUp>
                <svg width={14} height={12} viewBox="0 0 14 12"><path d="M7 0l7 12H0z" fill="#85848a" /></svg>
              </ScrollUp>
              <ScrollThumb />
            </ScrollTrack>
          </TreeArea>
          <TabBar>
            <Tab><I.ConfigTab />Конфигурация</Tab>
            <Tab $active><I.AstralTab />Астрал.ЭПД</Tab>
          </TabBar>
        </LeftPanel>
        <Gutter />
        <MainArea />
      </Workspace>

      <StatusBar>
        <StatusText>Для получения подсказки нажмите F1</StatusText>
        <StatusCell $w={45} $off>CAP</StatusCell>
        <StatusCell $w={51}>NUM</StatusCell>
        <StatusCell $w={36}>ru<Caret /></StatusCell>
        <GripCorner>
          <svg width={14} height={14} viewBox="0 0 14 14">
            <path d="M2 14L14 2M7 14l7-7" stroke="#cfcab0" strokeWidth="1.400" />
          </svg>
        </GripCorner>
      </StatusBar>

      <ContextMenu>
        <MenuRow>
          <MenuIcon><I.ModuleEdit /></MenuIcon>
          <MenuLabel>Открыть модуль объекта</MenuLabel>
        </MenuRow>
        <MenuRow>
          <MenuIcon><I.ModuleEdit /></MenuIcon>
          <MenuLabel>Открыть модуль менеджера</MenuLabel>
        </MenuRow>
        <MenuSep />
        <MenuRow>
          <MenuIcon />
          <MenuLabel $tone="off">Открыть основную форму</MenuLabel>
        </MenuRow>
        <MenuSep />
        <MenuRow>
          <MenuIcon />
          <MenuLabel $tone="off">Открыть</MenuLabel>
          <SubArrow $off />
        </MenuRow>
        <MenuSep />
        <MenuRow $hover>
          <MenuIcon />
          <MenuLabel $tone="hover">Сохранить как внешнюю обработку, отчет...</MenuLabel>
          <Callout />
        </MenuRow>
        <MenuRow>
          <MenuIcon />
          <MenuLabel>Заменить на внешнюю обработку, отчет...</MenuLabel>
        </MenuRow>
        <MenuRow>
          <MenuIcon />
          <MenuLabel>Сравнить, объединить с внешней обработкой, отчетом...</MenuLabel>
        </MenuRow>
        <MenuRow>
          <MenuIcon />
          <MenuLabel>Вставить внешнюю обработку, отчет...</MenuLabel>
        </MenuRow>
        <MenuSep />
        <MenuRow>
          <MenuIcon />
          <MenuLabel><Mn>Д</Mn>обавить</MenuLabel>
          <SubArrow />
        </MenuRow>
        <MenuRow>
          <MenuIcon><I.Pencil /></MenuIcon>
          <MenuLabel $bold><Mn>И</Mn>зменить</MenuLabel>
          <Shortcut $bold>F2</Shortcut>
        </MenuRow>
        <MenuRow>
          <MenuIcon><I.DocPlus /></MenuIcon>
          <MenuLabel><Mn>С</Mn>копировать</MenuLabel>
          <Shortcut>F9</Shortcut>
        </MenuRow>
        <MenuRow>
          <MenuIcon><I.RedX /></MenuIcon>
          <MenuLabel><Mn>У</Mn>далить</MenuLabel>
          <Shortcut>Del</Shortcut>
        </MenuRow>
        <MenuSep />
        <MenuRow>
          <MenuIcon><I.ArrowUp /></MenuIcon>
          <MenuLabel>Переместить вверх</MenuLabel>
          <Shortcut>Ctrl+Shift+Up</Shortcut>
        </MenuRow>
        <MenuRow>
          <MenuIcon><I.ArrowDown /></MenuIcon>
          <MenuLabel>Переместить вниз</MenuLabel>
          <Shortcut>Ctrl+Shift+Down</Shortcut>
        </MenuRow>
        <MenuRow>
          <MenuIcon><I.ListDown /></MenuIcon>
        </MenuRow>
      </ContextMenu>
    </Shell>
  </>
);

export default App;
